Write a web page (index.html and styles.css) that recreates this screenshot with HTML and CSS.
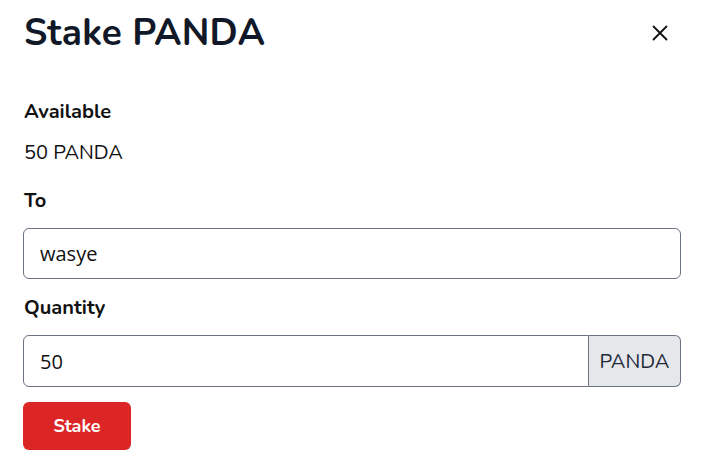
FILE: index.html
```html
<!DOCTYPE html>
<html>
<head>
<meta charset="utf-8">
<link rel="stylesheet" href="styles.css">
</head>
<body>
<div class="modal">
  <div class="header">
    <h1 class="title">Stake PANDA</h1>
    <button class="close" aria-label="Close">
      <svg width="16" height="16" viewBox="0 0 16 16"><path d="M1.5 1.5 L14.5 14.5 M14.5 1.5 L1.5 14.5" stroke="#111" stroke-width="1.8" stroke-linecap="round"/></svg>
    </button>
  </div>
  <div class="field first">
    <div class="label">Available</div>
    <div class="value">50 PANDA</div>
  </div>
  <div class="field">
    <div class="label">To</div>
    <input class="input" type="text" value="wasye">
  </div>
  <div class="field">
    <div class="label">Quantity</div>
    <div class="group">
      <input class="input group-input" type="text" value="50">
      <span class="addon">PANDA</span>
    </div>
  </div>
  <button class="stake">Stake</button>
</div>
</body>
</html>
```
FILE: styles.css
```css
* { box-sizing: border-box; }
body {
  margin: 0;
  background: #fff;
  font-family: "Nunito", "Lato", "Noto Sans", sans-serif;
  color: #111;
}
.modal {
  padding: 8px 23px 24px 23px;
  width: 704px;
}
.header {
  display: flex;
  align-items: center;
  justify-content: space-between;
  height: 50px;
  margin-bottom: 42px;
}
.title {
  margin: 0 0 0 1px;
  font-size: 37px;
  font-weight: 700;
  color: #111827;
  letter-spacing: 0.2px;
}
.close {
  background: none;
  border: 0;
  padding: 0;
  margin-right: 13px;
  width: 16px;
  height: 16px;
  display: flex;
}
.field {
  display: flex;
  flex-direction: column;
  margin-bottom: 17px;
}
.field.first { margin-bottom: 24px; }
.label {
  font-size: 20px;
  font-weight: 700;
  line-height: 24px;
  margin-bottom: 15px;
  padding-left: 1px;
}
.value {
  font-size: 20px;
  line-height: 24px;
  margin-top: 2px;
  padding-left: 1px;
}
.input {
  width: 658px;
  height: 51px;
  border: 1px solid #6b7280;
  border-radius: 6px;
  padding: 0 16px;
  font-family: "Open Sans", "Noto Sans", sans-serif;
  font-size: 20px;
  color: #111;
  outline: none;
}
.group {
  display: flex;
  width: 658px;
  height: 52px;
}
.group-input {
  flex: 1;
  width: auto;
  height: 52px;
  border-radius: 6px 0 0 6px;
  border-right: 1px solid #6b7280;
}
.addon {
  display: flex;
  align-items: center;
  justify-content: center;
  width: 92px;
  background: #e5e7eb;
  border: 1px solid #6b7280;
  border-left-width: 0;
  border-radius: 0 6px 6px 0;
  font-family: "Nunito", "Lato", "Noto Sans", sans-serif;
  font-size: 20px;
  color: #1f2937;
}
.stake {
  margin-top: -2px;
  width: 108px;
  height: 48px;
  background: #dc2626;
  color: #fff;
  border: 0;
  border-radius: 6px;
  font-family: "Nunito", "Lato", "Noto Sans", sans-serif;
  font-size: 18px;
  font-weight: 700;
}
```
